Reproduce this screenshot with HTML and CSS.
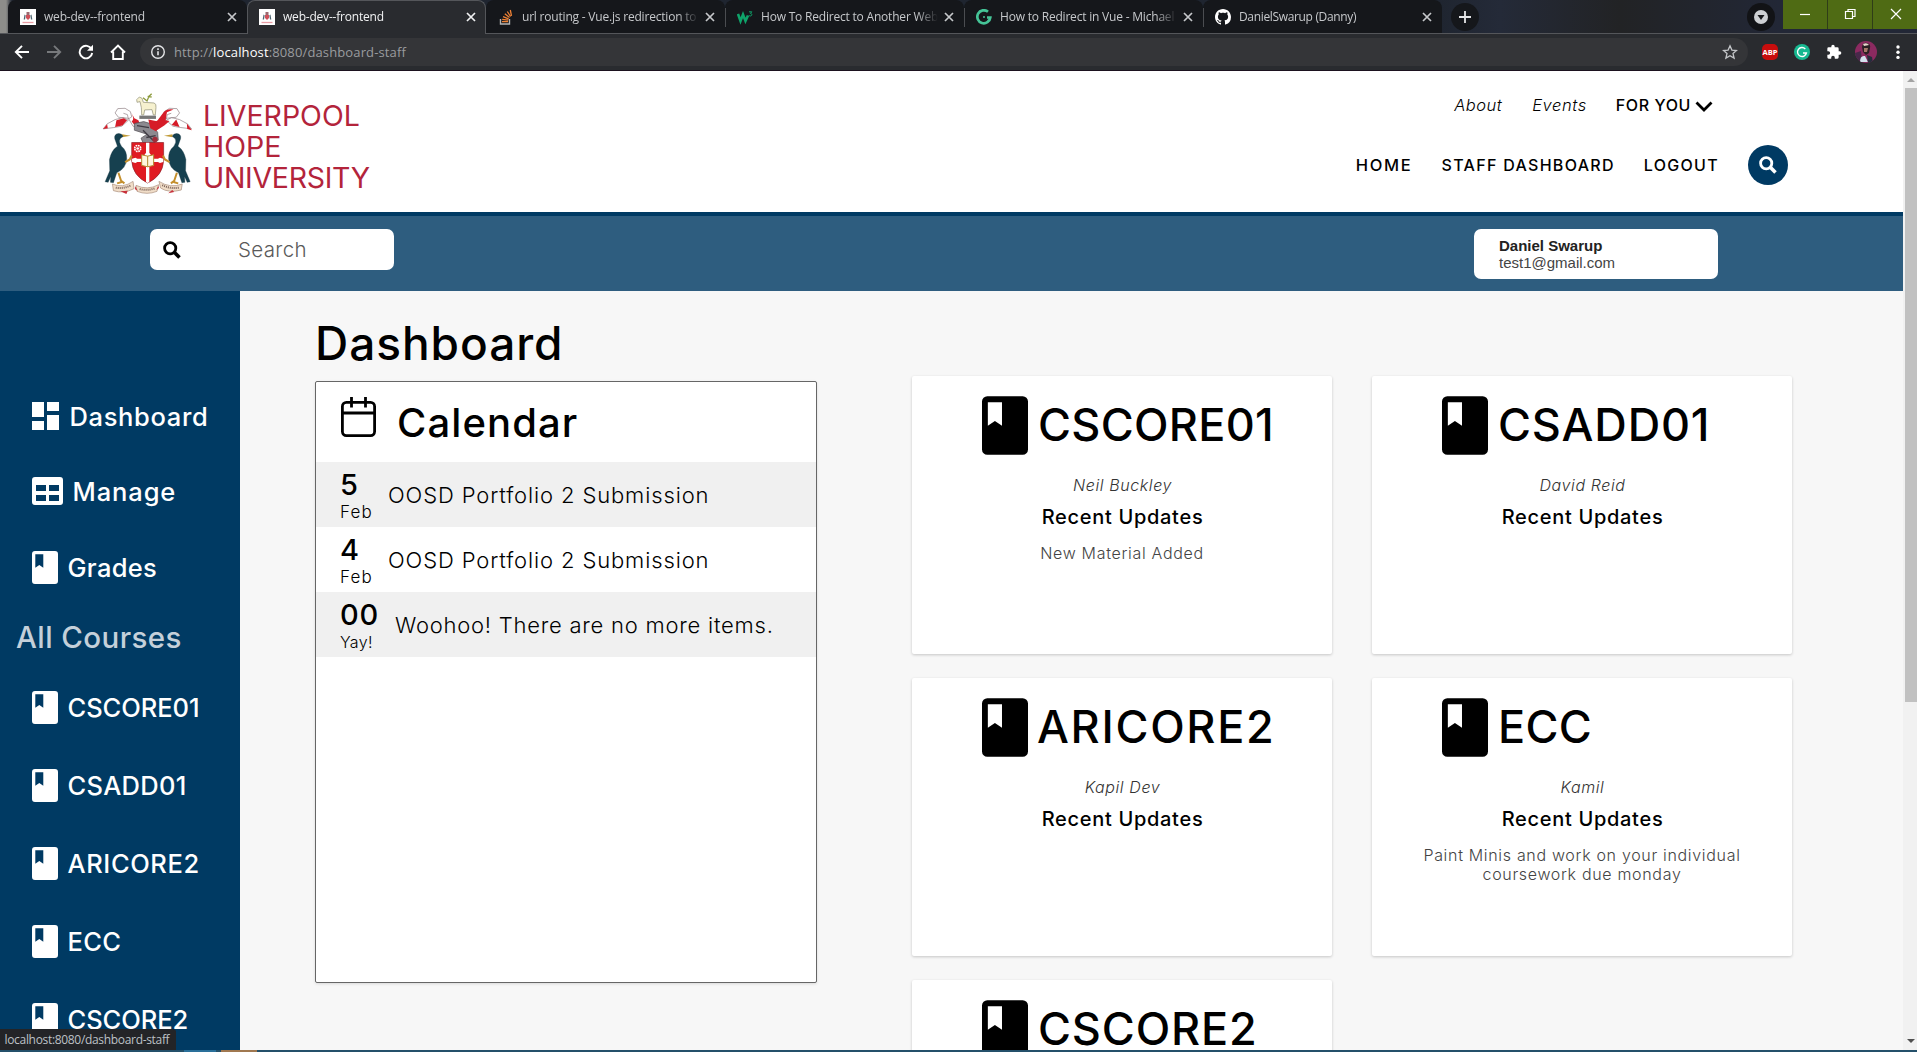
FILE: index.html
```html
<!DOCTYPE html>
<html lang="en">
<head>
<meta charset="utf-8">
<title>web-dev--frontend</title>
<link rel="stylesheet" href="styles.css">
</head>
<body>
<svg class="defs" aria-hidden="true">
  <symbol id="book" viewBox="0 0 26 33"><path fill-rule="evenodd" d="M3 0h20a3 3 0 0 1 3 3v27a3 3 0 0 1-3 3H3a3 3 0 0 1-3-3V3a3 3 0 0 1 3-3zM3.300 3.300v13.400l4-2.700 4 2.700V3.300z"/></symbol>
  <symbol id="close" viewBox="0 0 10 10"><path d="M1 1l8 8M9 1l-8 8" fill="none" stroke="currentColor" stroke-width="1.700"/></symbol>
  <symbol id="search" viewBox="0 0 18 18"><circle cx="7.200" cy="7.200" r="5.600" fill="none" stroke="currentColor" stroke-width="2.800"/><path d="M11.300 11.300l5.200 5.200" stroke="currentColor" stroke-width="3.600"/></symbol>
  <symbol id="fav" viewBox="0 0 16 16"><path fill="#fff" d="M0 0h16v16H0z"/><path d="M6 6h4v3l-2 2-2-2z" fill="#d0505a"/><path d="M4.500 5.500l1.200 1-.7 4-1.300 0zM11.500 5.500l-1.200 1 .7 4 1.300 0z" fill="#4d6470"/><path d="M6.500 3h3v3h-3z" fill="#9b6970"/><path d="M2.500 13.500h11" stroke="#e89ca4" stroke-width="1.300"/></symbol>
</svg>

<div class="tabs">
  <div class="tab"><svg class="favicon"><use href="#fav"/></svg><span class="tab-title">web-dev--frontend</span><svg class="close"><use href="#close"/></svg></div>
  <div class="tab active"><svg class="favicon"><use href="#fav"/></svg><span class="tab-title">web-dev--frontend</span><svg class="close"><use href="#close"/></svg></div>
  <div class="tab"><svg class="favicon" viewBox="0 0 16 16" fill="none"><path d="M2.500 10v5h9v-5" stroke="#b5b5b5" stroke-width="1.400"/><path d="M4 12.700h6M4.200 10.300l6 .9M5 7.600l5.600 2.200M6.800 4.800l4.700 3.700M9.300 2.500l3.300 5M12.300 1l1.200 5.800" stroke="#ef8236" stroke-width="1.300"/></svg><span class="tab-title">url routing - Vue.js redirection to another page</span><svg class="close"><use href="#close"/></svg></div>
  <div class="tab"><svg class="favicon" viewBox="0 0 16 16" fill="none"><path d="M1 5l2.500 7L6 5.500 8.500 12 11 6.500" stroke="#0fa36a" stroke-width="2.600"/><path d="M12 2.800h2.800l-1.400 1.600c2 0 1.800 2.600-.2 2.600-.8 0-1.200-.4-1.400-.8" stroke="#0fa36a"/></svg><span class="tab-title">How To Redirect to Another Webpage</span><svg class="close"><use href="#close"/></svg></div>
  <div class="tab"><svg class="favicon" viewBox="0 0 16 16" fill="none"><path d="M12 2.800A6.500 6.500 0 1 0 14.300 8.500H11" stroke="#45c497" stroke-width="2.700"/><circle cx="8" cy="8" r="1" fill="#45c497"/></svg><span class="tab-title">How to Redirect in Vue - Michael Thiessen</span><svg class="close"><use href="#close"/></svg></div>
  <div class="tab last"><svg class="favicon" viewBox="0 0 16 16"><path fill="#fff" d="M8 0C3.580 0 0 3.580 0 8c0 3.540 2.290 6.530 5.470 7.590.4.070.55-.17.55-.38 0-.19-.01-.82-.01-1.490-2.010.37-2.530-.49-2.690-.94-.09-.23-.48-.94-.82-1.130-.28-.15-.68-.52-.01-.53.63-.01 1.080.58 1.230.82.720 1.210 1.870.87 2.330.66.070-.52.280-.87.510-1.070-1.780-.2-3.640-.89-3.640-3.950 0-.87.310-1.590.82-2.150-.08-.2-.36-1.020.08-2.120 0 0 .67-.21 2.200.82.640-.18 1.320-.27 2-.27s1.360.09 2 .27c1.530-1.040 2.200-.82 2.200-.82.440 1.100.16 1.920.08 2.120.51.560.82 1.270.82 2.150 0 3.070-1.870 3.750-3.650 3.950.29.250.54.730.54 1.480 0 1.070-.01 1.930-.01 2.200 0 .21.15.46.55.38A8 8 0 0 0 16 8c0-4.420-3.580-8-8-8z"/></svg><span class="tab-title">DanielSwarup (Danny)</span><svg class="close"><use href="#close"/></svg></div>
  <svg class="newtab" viewBox="0 0 28 28"><circle cx="14" cy="14" r="14" fill="#15171b"/><path d="M14 8v12M8 14h12" stroke="#e4e5e7" stroke-width="1.800"/></svg>
  <svg class="tabmenu" viewBox="0 0 28 28"><circle cx="14" cy="14" r="14" fill="#121316"/><circle cx="14" cy="14" r="7" fill="#ced0d3"/><path d="M10.500 12h7L14 17z" fill="#17181b"/></svg>
  <div class="window">
    <svg viewBox="0 0 44 29"><path d="M17 14.500h10" stroke="#fff" stroke-width="1.200"/></svg>
    <svg viewBox="0 0 44 29" fill="none" stroke="#fff" stroke-width="1.200"><path d="M17.500 11.500h7v7h-7zM20 11.500v-2h7v7h-2.500"/></svg>
    <svg viewBox="0 0 44 29"><path d="M18 9l10 10M28 9l-10 10" stroke="#fff" stroke-width="1.200"/></svg>
  </div>
</div>

<div class="toolbar">
  <div class="nav-icons">
    <svg viewBox="0 0 16 16"><path d="M15 8H2M8 1.800L1.800 8 8 14.200"/></svg>
    <svg class="dim" viewBox="0 0 16 16"><path d="M1 8h13M8 1.800L14.200 8 8 14.200"/></svg>
    <svg viewBox="0 0 16 16"><path d="M13.600 5.200A6.300 6.300 0 1 0 14.200 9"/><path d="M15 .8v6H9z" fill="#fff" stroke="none"/></svg>
    <svg viewBox="0 0 16 16"><path d="M1 8.500L8 1.500l7 7M3.200 7.500V15h9.600V7.500"/></svg>
  </div>
  <div class="omnibox">
    <svg class="info" viewBox="0 0 16 16"><circle cx="8" cy="8" r="6.300" fill="none" stroke="#e4e5e7" stroke-width="1.400"/><path d="M8 7.200v4M8 4.300v1.600" stroke="#e4e5e7" stroke-width="1.600"/></svg>
    <span class="url">http://<b>localhost</b>:8080/dashboard-staff</span>
    <svg class="star" viewBox="0 0 16 16"><path d="M8 1.800l1.900 4.300 4.600.4-3.500 3 1.100 4.600L8 11.700l-4.100 2.400L5 9.500l-3.500-3 4.600-.4z" fill="none" stroke="#c3c5c8" stroke-width="1.300"/></svg>
  </div>
  <span class="abp">ABP</span>
  <svg class="ext" viewBox="0 0 16 16"><circle cx="8" cy="8" r="8" fill="#17b890"/><path d="M11.300 4.900A4.500 4.500 0 1 0 12.400 9H9" fill="none" stroke="#fff" stroke-width="1.400"/></svg>
  <svg class="ext" viewBox="0 0 24 24"><path fill="#fff" d="M20.500 11H19V7a2 2 0 0 0-2-2h-4V3.500a2.500 2.500 0 0 0-5 0V5H4a2 2 0 0 0-2 2v3.800h1.500a2.700 2.700 0 0 1 0 5.400H2V20a2 2 0 0 0 2 2h3.800v-1.500a2.700 2.700 0 0 1 5.400 0V22H17a2 2 0 0 0 2-2v-4h1.500a2.500 2.500 0 0 0 0-5z"/></svg>
  <svg class="avatar" viewBox="0 0 22 22"><clipPath id="face"><circle cx="11" cy="11" r="11"/></clipPath><g clip-path="url(#face)"><path fill="#8b2a60" d="M0 0h22v22H0z"/><path fill="#47294a" d="M0 12l6-2 1 12H0z"/><path d="M7 6q1-5 5-4 4 1 3 5l-1 5-3 2-3-3z" fill="#2a2024"/><path d="M8 3q4-2 6 1l-5 1z" fill="#e7d5cb"/><path d="M9 7h4l-1 4H9z" fill="#a57869"/><path d="M5 21q0-7 5-6l3 6z" fill="#d3e1ee"/><path d="M12 14l5 2 1 6h-5z" fill="#262d3c"/></g></svg>
  <svg class="more" viewBox="0 0 4 16" fill="#fff"><circle cx="2" cy="3" r="1.700"/><circle cx="2" cy="8.200" r="1.700"/><circle cx="2" cy="13.400" r="1.700"/></svg>
</div>

<div class="viewport">
  <div class="page">
    <header class="header">
      <div class="logo">
        <svg class="crest" viewBox="35 38 270 307">
          <path d="M158 52l12 10 6-14 8-8M172 48l12 2" fill="none" stroke="#8c9a3c" stroke-width="4"/>
          <path d="M139 58l8-8 8 4 4 12 32 2q8 2 6 14l-2 22h-6l-4-16-22 1-3 15h-6l-1-22-4-18-9 2z" fill="#f6f1cf" stroke="#8b8a70" stroke-width="2"/>
          <path d="M147 106h50v10h-50z" fill="#777"/>
          <path d="M150 142l-22-4-14-24-30-3-10-13 8-13 22-1 16 10 4 16-10 6-3-13-12-4M114 120l-20 18-24 4-32 4 12-15 24-13 24-6z" fill="#fff" stroke="#8c7c80" stroke-width="2"/>
          <path d="M122 96q12 20 2 28 10 16 28 14l-8-18-12-6zM100 114l-22 6-4 20 22-4 14-16zM50 132l-12 14 14-2z" fill="#d61c28"/>
          <path d="M192 142l22-4 14-24 30-3 10-13-8-13-22-1-16 10-4 16 10 6 3-13 12-4M228 120l20 18 24 4 32 4-12-15-24-13-24-6z" fill="#fff" stroke="#8c7c80" stroke-width="2"/>
          <path d="M220 96q10-12 30-8l-20 8-4 24 12 2-16 14-28 18-8-22 16-12zM258 118l10 22-24-6zM290 130l15 20-14-4z" fill="#d61c28"/>
          <path d="M132 130l28-6 20 6 22 26 2 24-16 10-30-2-6-14 18-12-38-12z" fill="#8c8a90" stroke="#4e4a50" stroke-width="2"/>
          <path d="M140 136l36 6M158 150l30 30M168 172l28-6" stroke="#403c44" stroke-width="4"/>
          <path d="M174 118l30 6-6 30-18-10z" fill="#d61c28"/><circle cx="194" cy="178" r="8" fill="#a22b38"/>
          <path d="M124 187h96v54q-2 46-48 68-46-22-48-68z" fill="#e01b22" stroke="#8a2028" stroke-width="2"/>
          <path d="M167 188h10v30l6 8-6 34v46l-5 3-5-3v-46l-6-34 6-8zM125 236l10-3 6 3h62l6-3 10 3v10l-10 3-6-3h-62l-6 3-10-3z" fill="#fff"/>
          <circle cx="142" cy="205" r="9" fill="none" stroke="#fff" stroke-width="5" stroke-dasharray="5 2"/><circle cx="142" cy="205" r="4" fill="#fff"/>
          <path d="M154 224l18 4 18-4v32l-18 4-18-4z" fill="#fff7df" stroke="#b28a2d" stroke-width="3"/><path d="M172 228v32" stroke="#b28a2d" stroke-width="3"/>
          <path d="M95 162l26 5-26 4z" fill="#c19a36"/><path d="M98 168q-4-9-14-8-14 2-11 16l8 22q-18 12-24 40l1 34-14 33 9 2 8-18-1 18 9 1 10-30q28-12 30-42 1-24-16-38-9-12-4-22z" fill="#16404f" stroke="#0c2d3a"/><path d="M104 246l14-8 6-12M84 278l8 24 10 8M94 306l-14 4" fill="none" stroke="#c48f2c" stroke-width="6"/>
          <path d="M247 162l-26 5 26 4z" fill="#c19a36"/><path d="M246 168q4-9 14-8 14 2 11 16l-8 22q18 12 24 40l-1 34 14 33-9 2-8-18 1 18-9 1-10-30q-28-12-30-42-1-24 16-38 9-12 4-22z" fill="#16404f" stroke="#0c2d3a"/><path d="M238 246l-14-8-6-12M260 278l-8 24-10 8M250 306l14 4" fill="none" stroke="#c48f2c" stroke-width="6"/>
          <path d="M66 312q30 14 62-8l3 22q-32 16-62 6zM137 316q34 16 68-2l-5 20q-30 12-60 0zM206 304q34 22 70 8l-3 18q-38 10-62-6z" fill="#f0ddc8" stroke="#a88b78" stroke-width="2"/>
          <path d="M76 323q22 4 46-7M148 327q22 6 46-2M216 315q22 12 50 8" fill="none" stroke="#7a6258" stroke-width="6" stroke-dasharray="3 3"/>
          <path d="M90 334l18 8 4-10zM134 318l8 14-8-4zM252 336l-18 4 12-10zM204 318l-6 12 8-6z" fill="#c8303a"/>
        </svg>
        <div class="logo-name"><span>LIVERPOOL</span><span>HOPE</span><span class="w-uni">UNIVERSITY</span></div>
      </div>
      <nav class="menus">
        <div class="menu-top"><a class="about">About</a><a class="events">Events</a><a class="foryou">FOR YOU<svg class="chevron" viewBox="0 0 18 11"><path d="M1.500 1.500L9 9l7.500-7.500" fill="none" stroke="#000" stroke-width="2.800"/></svg></a></div>
        <div class="menu-main"><a class="home">HOME</a><a class="staff">STAFF DASHBOARD</a><a class="logout">LOGOUT</a><span class="round"><svg><use href="#search"/></svg></span></div>
      </nav>
    </header>
    <div class="subbar">
      <div class="search"><svg><use href="#search"/></svg><span>Search</span></div>
      <div class="user"><b>Daniel Swarup</b><span>test1@gmail.com</span></div>
    </div>
    <div class="body">
      <aside class="sidebar">
        <a class="item"><svg class="i-dash" viewBox="0 0 27 28"><path d="M0 0h12v15H0zM15 0h12v9H15zM0 19h12v9H0zM15 13h12v15H15z"/></svg><span class="w-dash">Dashboard</span></a>
        <a class="item"><svg class="i-table" viewBox="0 0 31 28"><path fill-rule="evenodd" d="M3 0h25a3 3 0 0 1 3 3v22a3 3 0 0 1-3 3H3a3 3 0 0 1-3-3V3a3 3 0 0 1 3-3zM4 8v6h10V8zM17 8v6h10V8zM4 18v6h10v-6zM17 18v6h10v-6z"/></svg><span class="w-manage">Manage</span></a>
        <a class="item tall"><svg class="i-book"><use href="#book"/></svg><span>Grades</span></a>
        <h2>All Courses</h2>
        <a class="item tall"><svg class="i-book"><use href="#book"/></svg><span class="w-core">CSCORE01</span></a>
        <a class="item tall"><svg class="i-book"><use href="#book"/></svg><span>CSADD01</span></a>
        <a class="item tall"><svg class="i-book"><use href="#book"/></svg><span class="w-ari">ARICORE2</span></a>
        <a class="item tall"><svg class="i-book"><use href="#book"/></svg><span>ECC</span></a>
        <a class="item tall"><svg class="i-book"><use href="#book"/></svg><span class="w-core">CSCORE2</span></a>
      </aside>
      <main class="main">
        <section class="left">
          <h1>Dashboard</h1>
          <div class="calendar">
            <div class="cal-head"><svg viewBox="0 0 35 40" fill="none" stroke="#000" stroke-width="2.800"><rect x="1.400" y="5.400" width="32.200" height="33.200" rx="4"/><path d="M1.500 16h32M10.500 0v10.500M24.500 0v10.500"/></svg><h2>Calendar</h2></div>
            <div class="event"><div class="date"><b>5</b><span>Feb</span></div><p>OOSD Portfolio 2 Submission</p></div>
            <div class="event"><div class="date"><b>4</b><span>Feb</span></div><p>OOSD Portfolio 2 Submission</p></div>
            <div class="event end"><div class="date"><b>00</b><span>Yay!</span></div><p>Woohoo! There are no more items.</p></div>
          </div>
        </section>
        <section class="cards">
          <article class="card"><div class="title"><svg><use href="#book"/></svg><h2 class="t-tight">CSCORE01</h2></div><i>Neil Buckley</i><h3>Recent Updates</h3><p>New Material Added</p></article>
          <article class="card"><div class="title"><svg><use href="#book"/></svg><h2>CSADD01</h2></div><i>David Reid</i><h3>Recent Updates</h3></article>
          <article class="card"><div class="title"><svg><use href="#book"/></svg><h2 class="t-wide">ARICORE2</h2></div><i>Kapil Dev</i><h3>Recent Updates</h3></article>
          <article class="card"><div class="title"><svg><use href="#book"/></svg><h2 class="t-tight">ECC</h2></div><i>Kamil</i><h3>Recent Updates</h3><p>Paint Minis and work on your individual coursework due monday</p></article>
          <article class="card"><div class="title"><svg><use href="#book"/></svg><h2>CSCORE2</h2></div></article>
        </section>
      </main>
    </div>
  </div>
  <div class="scrollbar"><span class="arrow up"></span><span class="thumb"></span><span class="arrow down"></span></div>
  <div class="status">localhost:8080/dashboard-staff</div>
</div>
<div class="taskbar"></div>
</body>
</html>
```
FILE: styles.css
```css
* { box-sizing: border-box; }
body { margin: 0; width: 1917px; height: 1052px; overflow: hidden; display: flex; flex-direction: column; font-family: Inter, "Noto Sans", sans-serif; color: #000; background: #f7f7f7; }
h1, h2, h3, p { margin: 0; font-weight: 500; }
svg { flex: none; display: block; }
.defs { position: absolute; width: 0; height: 0; }

/* browser tabs */
.tabs { height: 34px; flex: none; display: flex; align-items: flex-start; padding-left: 8px; background: linear-gradient(90deg, #8d8d8a 0, #8d8d8a 6px, #1f2530 12px, #1f2530 1440px, #242a38 1500px, #222325 1620px, #222736 1780px); box-shadow: inset 0 -1px #54565a; }
.tab { width: 239px; height: 33px; flex: none; display: flex; align-items: center; padding: 1px 10px 0 12px; border-radius: 8px 8px 0 0; background: #15171b; color: #c6c8cb; font: 12px/18px "Open Sans", sans-serif; letter-spacing: -.2px; position: relative; }
.tab + .tab:not(.active)::before { content: ""; position: absolute; left: 0; top: 8px; height: 19px; width: 1px; background: #4b4d51; }
.tab.active + .tab::before { display: none; }
.tab.active { height: 34px; background: #292b2f; color: #f1f2f3; border: 1px solid #54565a; border-bottom: 0; padding-left: 11px; padding-right: 9px; padding-top: 0; padding-bottom: 1px; }
.tab.last { letter-spacing: -.34px; }
.favicon { width: 16px; height: 16px; margin-right: 8px; }
.tab-title { flex: 1; overflow: hidden; white-space: nowrap; margin-right: 6px; -webkit-mask-image: linear-gradient(90deg, #000 88%, transparent); mask-image: linear-gradient(90deg, #000 88%, transparent); }
.close { width: 10px; height: 10px; }
.newtab { width: 28px; height: 28px; margin: 3px 0 0 9px; }
.tabmenu { width: 28px; height: 28px; margin: 3px 8px 0 auto; }
.window { display: flex; gap: 1px; width: 134px; height: 29px; background: #2f3d18; }
.window svg { flex: 1; min-width: 0; height: 29px; background: #4f6b14; }

/* address bar */
.toolbar { height: 37px; flex: none; display: flex; align-items: center; background: #292b2f; border-bottom: 1px solid #1c121f; }
.nav-icons { display: flex; gap: 16px; padding: 0 14px; }
.nav-icons svg { width: 16px; height: 16px; fill: none; stroke: #fff; stroke-width: 1.900; }
.nav-icons .dim { stroke: #77797c; }
.omnibox { width: 1608px; height: 28px; border-radius: 14px; background: #343538; display: flex; align-items: center; padding: 0 10px; }
.info { width: 16px; height: 16px; margin-right: 8px; }
.url { flex: 1; font: 13px/20px "Open Sans", sans-serif; letter-spacing: .13px; color: #9a9c9f; }
.url b { font-weight: 400; color: #fff; }
.star { width: 16px; height: 16px; }
.abp { width: 16px; height: 16px; margin-left: 14px; border-radius: 5px; background: #c70d0d; color: #fff; font: 700 7.500px/16px "Open Sans", sans-serif; text-align: center; }
.ext { width: 16px; height: 16px; margin-left: 16px; }
.avatar { width: 22px; height: 22px; margin-left: 13px; }
.more { width: 4px; height: 16px; margin-left: 19px; }

.viewport { height: 979px; flex: none; display: flex; position: relative; overflow: hidden; }
.page { width: 1903px; }

/* header */
.header { height: 145px; background: #fff; border-bottom: 4px solid #003a63; display: flex; justify-content: space-between; padding: 22px 115px 0 102px; }
.logo { display: flex; gap: 11px; }
.crest { width: 90px; height: 102px; }
.logo-name { display: flex; flex-direction: column; padding-top: 6.500px; color: #b3243b; font-size: 28.500px; line-height: 31.400px; letter-spacing: 0; }
.w-uni { letter-spacing: -.3px; }
.menus { display: flex; flex-direction: column; align-items: flex-end; font-size: 16px; font-weight: 500; line-height: 20px; padding-top: 2px; }
.menu-top { display: flex; padding-right: 75px; margin-bottom: 30px; }
.about, .events { font-style: italic; font-weight: 300; font-size: 16.500px; }
.about { letter-spacing: .5px; margin-right: 30px; }
.events { letter-spacing: .59px; margin-right: 29px; }
.foryou { display: flex; align-items: center; letter-spacing: .6px; }
.chevron { width: 18px; height: 11px; margin-left: 4px; margin-top: 2px; }
.menu-main { display: flex; align-items: center; gap: 29px; }
.home { font-size: 16.500px; letter-spacing: 1.700px; }
.staff { letter-spacing: 1.300px; }
.logout { letter-spacing: 1.300px; }
.round { width: 40px; height: 40px; border-radius: 50%; background: #003a63; color: #fff; display: flex; align-items: center; justify-content: center; }
.round svg { width: 18px; height: 18px; }

.subbar { height: 75px; background: #2e5d7f; display: flex; justify-content: space-between; align-items: flex-start; padding: 13px 185px 0 150px; }
.search { width: 244px; height: 41px; border-radius: 7px; background: #fff; display: flex; align-items: center; padding-left: 13px; }
.search svg { width: 18px; height: 18px; }
.search span { margin: -1px 0 0 57px; font-size: 20.500px; font-weight: 300; letter-spacing: .35px; color: #5a5a5a; }
.user { width: 244px; height: 50px; border-radius: 7px; background: #fff; padding: 8px 25px; display: flex; flex-direction: column; font: 15px/17px "Liberation Sans", Arial, sans-serif; color: #444; }
.user b { color: #222; }

/* sidebar */
.body { display: flex; height: 759px; }
.sidebar { width: 240px; flex: none; overflow: hidden; background: #003a63; color: #fff; fill: #fff; padding-top: 87.500px; }
.item { display: flex; align-items: center; height: 75px; padding-left: 32px; font-size: 25.500px; font-weight: 500; letter-spacing: .3px; }
.item.tall { height: 78px; }
.i-dash { width: 27px; height: 28px; margin-right: 10.500px; }
.i-table { width: 31px; height: 28px; margin-right: 9.500px; }
.i-book { width: 26px; height: 33px; margin-right: 9.500px; }
.w-dash { letter-spacing: .65px; }
.w-manage { letter-spacing: .9px; }
.w-core { letter-spacing: -.05px; }
.w-ari { letter-spacing: .61px; }
.sidebar h2 { height: 62px; padding-left: 16px; font-size: 29.500px; line-height: 61px; letter-spacing: .4px; color: #c4d0da; }

/* content */
.main { flex: 1; display: flex; padding-left: 75px; background: #f7f7f7; overflow: hidden; }
.left { width: 502px; padding-top: 23px; }
h1 { height: 60px; margin-bottom: 7px; font-size: 46px; line-height: 59px; letter-spacing: .95px; }
.calendar { height: 602px; background: #fff; border: 1px solid #666; border-radius: 2px; box-shadow: 0 1px 3px rgba(0,0,0,.12); }
.cal-head { height: 80px; display: flex; align-items: center; padding-left: 25px; }
.cal-head svg { width: 35px; height: 40px; margin: 0 21px 10px 0; }
.cal-head h2 { font-size: 40px; letter-spacing: 1.100px; }
.event { height: 65px; display: flex; align-items: center; gap: 16px; padding-left: 24px; }
.event:nth-child(even) { background: #f0f0f0; }
.date { display: flex; flex-direction: column; gap: 2.500px; padding-top: 3px; width: 32px; }
.end .date { width: 39px; }
.date b { font-size: 29px; line-height: 30px; font-weight: 500; letter-spacing: .7px; }
.date span { font-size: 17px; line-height: 20px; font-weight: 300; letter-spacing: 1.200px; }
.end .date span { font-size: 16px; letter-spacing: .35px; }
.event p { font-size: 22px; font-weight: 300; letter-spacing: .87px; }
.end p { letter-spacing: .76px; }

.cards { margin: 85px 0 0 95px; display: grid; grid-template-columns: 420px 420px; grid-auto-rows: 278px; gap: 24px 40px; align-content: start; }
.card { background: #fff; border-radius: 2px; box-shadow: 0 1px 3px rgba(0,0,0,.2); padding-top: 20px; display: flex; flex-direction: column; align-items: center; }
.title { align-self: stretch; height: 59px; display: flex; align-items: center; padding-left: 70px; }
.title svg { width: 46px; height: 59px; margin-right: 10px; }
.title h2 { font-size: 45px; line-height: 56px; margin-bottom: 2px; letter-spacing: .85px; }
.title .t-tight { letter-spacing: .3px; }
.title .t-wide { letter-spacing: 1.700px; margin-left: -1px; }
.card i { margin: 20px 0 0 1px; font-size: 16px; line-height: 20px; font-weight: 300; letter-spacing: .6px; color: #333; }
.card h3 { margin: 10px 0 0 1px; font-size: 20px; line-height: 24px; letter-spacing: .7px; }
.card p { margin-top: 14.500px; width: 330px; text-align: center; font-size: 16px; line-height: 19px; font-weight: 300; letter-spacing: .68px; color: #444; }

/* browser overlays */
.scrollbar { width: 14px; background: #f1f1f1; display: flex; flex-direction: column; align-items: center; padding: 7px 0 7px 2px; }
.arrow { width: 0; height: 0; border: 4px solid transparent; }
.up { border-top: 0; border-bottom-color: #a3a3a3; }
.thumb { width: 12px; height: 614px; margin-top: 6px; background: #c1c1c1; }
.down { border-bottom: 0; border-top-color: #505050; margin-top: auto; }
.status { position: absolute; left: 0; bottom: 0; width: 176px; height: 21px; padding-left: 4.500px; background: #232427; color: #bdc1c6; font: 12px/21px "Open Sans", sans-serif; letter-spacing: -.32px; white-space: nowrap; border-top-right-radius: 3px; }
.taskbar { height: 2px; background: linear-gradient(90deg, #24506a 184px, #2a709a 184px, #2a709a 216px, #24506a 216px, #24506a 221px, #a07850 221px, #a07850 257px, #24506a 257px); }
```
